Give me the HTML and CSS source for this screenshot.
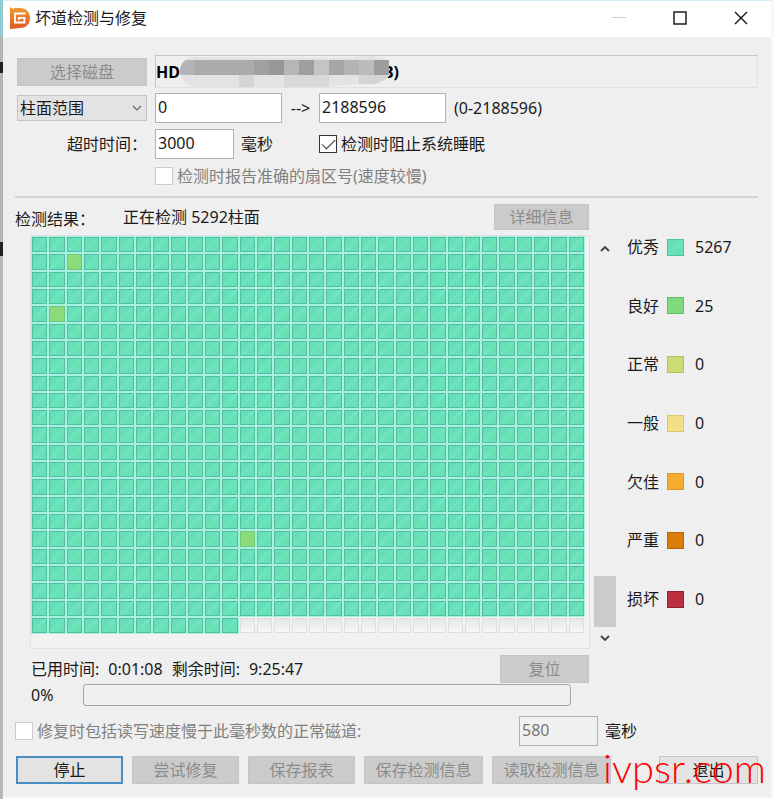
FILE: index.html
```html
<!DOCTYPE html>
<html lang="zh-CN">
<head>
    <meta charset="UTF-8">
    <meta name="viewport" content="width=device-width, initial-scale=1.0">
    <title>坏道检测与修复</title>
    <link rel="stylesheet" href="styles.css">
</head>
<body>
    <div class="window">
        <header class="titlebar">
            <svg class="logo" viewBox="0 0 20 22">
                <defs>
                    <linearGradient id="logo-fill" x1="0" y1="0" x2="0" y2="1">
                        <stop offset="0" stop-color="#f39a35"/>
                        <stop offset="1" stop-color="#dd5a22"/>
                    </linearGradient>
                </defs>
                <path d="M0 0l4 2.500V1h6c6 0 10 4 10 10s-4 10-10 10L0 22z" fill="url(#logo-fill)"/>
                <path d="M15.500 6.500H5V15.500H14.500V10.800H9V13" fill="none" stroke="#fff" stroke-width="1.800"/>
            </svg>
            <h1>坏道检测与修复</h1>
            <div class="window-buttons">
                <button aria-label="最小化" disabled><svg viewBox="0 0 14 14"><path d="M0 6.500h14" stroke="#cfcfcf"/></svg></button>
                <button aria-label="最大化"><svg viewBox="0 0 14 14"><rect x="1" y="1" width="12" height="12" fill="none" stroke="#111" stroke-width="1.400"/></svg></button>
                <button aria-label="关闭"><svg viewBox="0 0 14 14"><path d="M1 1l12 12M13 1L1 13" stroke="#111" stroke-width="1.400"/></svg></button>
            </div>
        </header>
        <main>
            <section class="settings">
                <button class="btn" disabled>选择磁盘</button>
                <div class="disk-name">
                    <span>HD</span>
                    <svg class="mask" viewBox="0 0 209 32">
                        <clipPath id="mask-clip"><path d="M0 16C0 8 6 1 14 1L160 2L192 0L209 4V20Q204 26 194 28Q165 28 145 31H18Q2 31 0 16z"/></clipPath>
                        <g clip-path="url(#mask-clip)">
                            <rect width="209" height="32" fill="#e3e3e3"/>
                            <rect y="4" width="209" height="15" fill="#ababab"/>
                            <rect y="4" width="14" height="15" fill="#b4b4b6"/>
                            <rect x="74" y="4" width="15" height="15" fill="#a0a0a0"/>
                            <rect x="89" y="4" width="15" height="15" fill="#979799"/>
                            <rect x="104" y="4" width="15" height="15" fill="#b6b6b6"/>
                            <rect x="119" y="4" width="15" height="15" fill="#9f9f9f"/>
                            <rect x="134" y="4" width="15" height="15" fill="#c4c4c4"/>
                            <rect x="149" y="4" width="15" height="15" fill="#a6a6a6"/>
                            <rect x="164" y="4" width="15" height="15" fill="#b3b3b3"/>
                            <rect x="179" y="4" width="15" height="15" fill="#bcbcbc"/>
                            <rect x="194" y="4" width="15" height="15" fill="#9d9d9d"/>
                            <rect x="59" y="19" width="15" height="12" fill="#d4d4d4"/>
                            <rect x="104" y="19" width="45" height="12" fill="#d8d8d8"/>
                            <rect x="179" y="19" width="30" height="12" fill="#d4d4d4"/>
                        </g>
                    </svg>
                    <span>B)</span>
                </div>

                <div class="select">
                    <select aria-label="范围类型">
                        <option>柱面范围</option>
                    </select>
                    <svg viewBox="0 0 12 8"><path d="M2 2l4 4 4-4" fill="none" stroke="#666" stroke-width="1.200"/></svg>
                </div>
                <div class="row">
                    <input class="field wide" type="text" value="0" aria-label="起始柱面">
                    <span class="arrow">--&gt;</span>
                    <input class="field wide" type="text" value="2188596" aria-label="结束柱面">
                    <span class="range">(0-2188596)</span>
                </div>

                <label class="timeout-label" for="timeout">超时时间：</label>
                <div class="row">
                    <input class="field" id="timeout" type="text" value="3000">
                    <span class="unit">毫秒</span>
                    <label class="check sleep"><input type="checkbox" checked>检测时阻止系统睡眠</label>
                </div>

                <label class="check report"><input type="checkbox" disabled>检测时报告准确的扇区号(速度较慢)</label>
            </section>

            <section class="result">
                <div class="result-head">
                    <h2>检测结果：</h2>
                    <span class="status">正在检测 5292柱面</span>
                    <button class="btn detail" disabled>详细信息</button>
                </div>
                <div class="result-body">
                    <div class="map" id="map"></div>
                    <div class="scrollbar">
                        <svg viewBox="0 0 10 6"><path d="M1 5l4-4 4 4" fill="none" stroke="#444" stroke-width="1.800"/></svg>
                        <div class="thumb"></div>
                        <svg viewBox="0 0 10 6"><path d="M1 1l4 4 4-4" fill="none" stroke="#444" stroke-width="1.800"/></svg>
                    </div>
                    <ul class="legend">
                        <li>优秀<i class="cell excellent"></i>5267</li>
                        <li>良好<i class="cell fine"></i>25</li>
                        <li>正常<i class="cell normal"></i>0</li>
                        <li>一般<i class="cell average"></i>0</li>
                        <li>欠佳<i class="cell poor"></i>0</li>
                        <li>严重<i class="cell severe"></i>0</li>
                        <li>损坏<i class="cell damaged"></i>0</li>
                    </ul>
                </div>
            </section>

            <section class="timing">
                <span>已用时间:</span>
                <span class="time">0:01:08</span>
                <span>剩余时间:</span>
                <span class="time">9:25:47</span>
                <button class="btn reset" disabled>复位</button>
            </section>
            <section class="progress">
                <label for="progress">0%</label>
                <progress id="progress" value="0" max="100"></progress>
            </section>

            <section class="repair">
                <label class="check"><input type="checkbox" disabled>修复时包括读写速度慢于此毫秒数的正常磁道:</label>
                <input class="field" type="text" value="580" aria-label="毫秒数" disabled>
                <span class="unit">毫秒</span>
            </section>

            <footer class="actions">
                <button class="btn active">停止</button>
                <button class="btn" disabled>尝试修复</button>
                <button class="btn" disabled>保存报表</button>
                <button class="btn long" disabled>保存检测信息</button>
                <button class="btn long" disabled>读取检测信息</button>
                <button class="btn exit">退出</button>
                <span class="watermark">ivpsr.com</span>
            </footer>
        </main>
    </div>
    <script>
        const columns = 32;
        const rows = 23;
        const scanned = (rows - 1) * columns + 12;
        const slower = [34, 129, 556];
        const map = document.getElementById('map');

        for (let i = 0; i < rows * columns; i++) {
            const cell = document.createElement('i');
            cell.className = 'cell';
            if (slower.includes(i)) {
                cell.classList.add('good');
            } else if (i < scanned) {
                cell.classList.add('excellent');
            }
            map.appendChild(cell);
        }
    </script>
</body>
</html>
```
FILE: styles.css
```css
* {
    box-sizing: border-box;
}
body {
    margin: 0;
    padding: 0 3px;
    background: #f8f8f8 linear-gradient(#8ecad2 0 36px, #b5b4b0 36px 62px, #222 62px 73px, #b5b4b0 73px 242px, #222 242px 256px, #bab6b2 256px) no-repeat left / 3px 100%;
    color: #1a1a1a;
    font-family: "Noto Sans", "Noto Sans CJK SC", sans-serif;
    font-size: 16px;
    line-height: 24px;
}
button, input, select {
    font: inherit;
    color: inherit;
    margin: 0;
}
h1, h2 {
    margin: 0;
    font-size: 16px;
    font-weight: normal;
}
.window {
    background-color: #efefef;
    min-height: 100vh;
    border-top: 1px solid #d3f2f8;
    border-bottom: 2px solid #fafafa;
}
.titlebar {
    display: flex;
    align-items: center;
    height: 36px;
    padding: 0 0 2px 7px;
    background-color: white;
}
.logo {
    width: 20px;
    height: 22px;
    margin-right: 5px;
}
.window-buttons {
    display: flex;
    margin-left: auto;
}
.window-buttons button {
    width: 61px;
    height: 32px;
    padding: 0;
    border: none;
    background: none;
}
.window-buttons svg {
    display: block;
    width: 14px;
    height: 14px;
    margin: 0 auto;
}
main {
    padding: 18px 13px 12px 12px;
}
.row {
    display: flex;
    align-items: center;
}
.btn {
    height: 28px;
    padding: 0;
    border: 1px solid #c4c4c4;
    background-color: #e3e3e3;
    line-height: 24px;
}
.btn:disabled {
    background-color: #cbcbcb;
    color: #8b8b8b;
}
.field {
    width: 79px;
    height: 30px;
    padding: 0 2px 3px;
    border: 1px solid #b2b2b2;
    background-color: white;
}
.field.wide {
    width: 127px;
}
.field:disabled {
    background-color: #f0f0f0;
    color: #777;
}
.unit {
    padding-left: 7px;
}
.check {
    display: flex;
    align-items: center;
}
.check input {
    appearance: none;
    display: grid;
    width: 18px;
    height: 18px;
    margin-right: 4px;
    border: 1px solid #333;
    background-color: white;
}
.check input:checked::before {
    content: "";
    width: 12px;
    height: 6px;
    margin: 3px 2px;
    border: solid #333;
    border-width: 0 0 1px 1px;
    transform: rotate(-45deg);
}
.check input:disabled {
    border-color: #ccc;
}
.check:has(input:disabled) {
    color: #808080;
}
.settings {
    display: grid;
    grid-template-columns: 130px 1fr;
    column-gap: 8px;
    row-gap: 4px;
    align-items: center;
    padding: 0 0 8px 2px;
    border-bottom: 2px solid #d3d3d3;
}
.disk-name {
    display: flex;
    align-items: center;
    height: 33px;
    border: 1px solid #e1e1e1;
    border-top-color: #c6c6c6;
    border-left-color: #c6c6c6;
    color: black;
    font-weight: bold;
}
.mask {
    position: relative;
    width: 209px;
    height: 32px;
    flex: none;
    margin-right: -6px;
}
.select {
    position: relative;
}
.select select {
    appearance: none;
    display: block;
    width: 100%;
    height: 26px;
    padding: 0 2px 2px;
    border: 1px solid #c4c4c4;
    border-radius: 0;
    background-color: #e3e3e3;
}
.select svg {
    position: absolute;
    top: 9px;
    right: 4px;
    width: 12px;
    height: 8px;
}
.arrow {
    width: 37px;
    text-align: center;
}
.range {
    padding-left: 8px;
}
.settings .row {
    height: 32px;
}
.timeout-label {
    text-align: right;
}
.sleep {
    margin-left: 46px;
}
.report {
    grid-column: 2;
}
.result-head {
    display: flex;
    align-items: center;
    padding: 5px 0 4px;
}
.result-head h2 {
    padding-top: 4px;
}
.status {
    margin-left: 28px;
}
.detail {
    width: 95px;
    height: 26px;
    margin-left: auto;
    margin-right: 169px;
}
.result-body {
    display: flex;
    padding-left: 15px;
}
.map {
    flex: 1;
    display: grid;
    grid-template-columns: repeat(32, 1fr);
    gap: 2px;
    padding: 1px 5px 15px 1px;
    border: 1px solid #e0e0e0;
    background-color: #f2f2f2;
}
.cell {
    display: block;
    aspect-ratio: 1;
    border: 1px solid #dedede;
    background: linear-gradient(#e6e6e6, #f8f8f8);
}
.map .excellent, .map .good {
    box-shadow: 0 0 0 1px #a9f1df;
}
.cell.excellent {
    border-color: #52bfa5;
    background: linear-gradient(135deg, #66dfb8 30%, #6de6bc 50%, #67e0b8 70%);
}
.cell.good {
    border-color: #6fc87b;
    background: #8cdb7b;
}
.cell.fine {
    border-color: #62bd68;
    background: #80da7f;
}
.cell.normal {
    border-color: #b2bf60;
    background: #ccdc74;
}
.cell.average {
    border-color: #dfc472;
    background: #f4df87;
}
.cell.poor {
    border-color: #dd9728;
    background: #f5ac2f;
}
.cell.severe {
    border-color: #b5660b;
    background: #dc7c0c;
}
.cell.damaged {
    border-color: #8f2331;
    background: #bd2e40;
}
.scrollbar {
    display: flex;
    flex-direction: column;
    align-items: center;
    width: 22px;
    margin: 11px 11px 8px 4px;
}
.scrollbar svg {
    width: 10px;
    height: 6px;
}
.thumb {
    width: 100%;
    height: 51px;
    margin: auto 0 8px;
    background-color: #cbcbcb;
}
.legend {
    display: flex;
    flex-direction: column;
    justify-content: space-between;
    width: 131px;
    margin: 0 0 38px;
    padding: 0;
    list-style: none;
}
.legend li {
    display: flex;
    align-items: center;
}
.legend .cell {
    width: 17px;
    margin: 0 11px 0 8px;
}
.timing {
    display: flex;
    align-items: center;
    padding: 6px 169px 0 16px;
}
.time {
    margin: 0 9px;
}
.reset {
    width: 89px;
    margin-left: auto;
}
.progress {
    display: flex;
    align-items: center;
    padding: 0 187px 0 16px;
}
.progress label {
    width: 52px;
}
.progress progress {
    appearance: none;
    flex: 1;
    height: 22px;
    border: 1px solid #a5a5a5;
    border-radius: 3px;
    background-color: #efefef;
}
progress::-webkit-progress-bar {
    background: none;
}
.repair {
    display: flex;
    align-items: center;
    padding: 9px 121px 10px 0;
}
.repair .check {
    margin-right: auto;
}
.actions {
    position: relative;
    display: flex;
    gap: 9px;
    padding-left: 1px;
}
.actions .btn {
    width: 107px;
}
.actions .long {
    width: 119px;
}
.actions .active {
    border: 2px solid #4a8fc4;
}
.actions .exit {
    width: 99px;
    margin-left: auto;
}
.watermark {
    position: absolute;
    top: -2px;
    right: -8px;
    color: #ff0000;
    font-family: Lato, "Liberation Sans", sans-serif;
    font-size: 40px;
    font-weight: 300;
    line-height: 28px;
}
```
